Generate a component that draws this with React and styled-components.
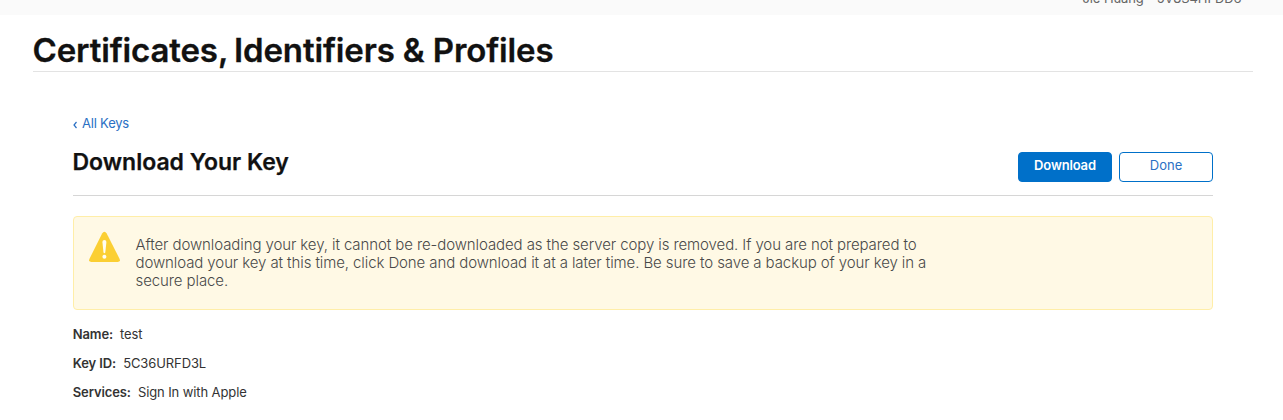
import React from "react";
import styled, { createGlobalStyle } from "styled-components";

const GlobalStyle = createGlobalStyle`
  * { box-sizing: border-box; }
  body { margin: 0; background: #fff; color: #111; font-family: Inter, "Liberation Sans", sans-serif; overflow: hidden; }
`;
const Page = styled.div`height: 420px; overflow: hidden;`;
const TopBar = styled.header`
  height: 15px; background: #fafafa; display: flex; justify-content: flex-end; align-items: flex-end;
  padding: 0 41.5px 9px 0; font-size: 13px; line-height: 16px; letter-spacing: -0.1px; color: #666; white-space: pre; overflow: hidden;
`;
const Title = styled.h1`
  margin: 0 30px 0 33px; height: 57px; padding-top: 15px; border-bottom: 1px solid #e3e3e3;
  font-size: 33px; line-height: 40px; font-weight: 600; letter-spacing: -0.13px; text-indent: -0.5px;
  -webkit-text-stroke: 0.3px #111;
`;
const Comma = styled.span`letter-spacing: -2.6px;`;
const Main = styled.main`padding: 44px 70px 0 73px;`;
const BackLink = styled.a`
  display: flex; align-items: center; gap: 5px; height: 16px; padding-bottom: 2px; font-size: 13px; line-height: 14px;
  letter-spacing: -0.2px; color: #2a70c4;
`;
const Chevron = styled.svg`margin-top: 3px;`;
const Heading = styled.div`
  display: flex; justify-content: space-between; height: 64px; border-bottom: 1px solid #d6d6d6;
`;
const Subtitle = styled.h2`
  margin: 15px 0 0; font-size: 23px; line-height: 30px; font-weight: 600; text-indent: -0.5px;
  -webkit-text-stroke: 0.25px #111;
`;
const Actions = styled.div`display: flex; gap: 7px; padding-top: 20px;`;
const Button = styled.button`
  width: 94px; height: 30px; padding: 0 0 4px; border: 1px solid #0070c9; border-radius: 4px;
  background: ${(p) => (p.$primary ? "#0070c9" : "#fff")}; color: ${(p) => (p.$primary ? "#fff" : "#2a70c4")};
  font: ${(p) => (p.$primary ? 600 : 400)} 13px/18px Inter, sans-serif;
  letter-spacing: ${(p) => (p.$primary ? "-0.15px" : "0")};
`;
const Notice = styled.section`
  margin-top: 20px; height: 94px; padding: 14px 15px 0; display: flex; gap: 14.5px;
  border: 1px solid #ffeea8; border-radius: 4px; background: #fff9e5;
`;
const Message = styled.p`
  margin: 5px 0 0; font-size: 15px; line-height: 18px; font-weight: 300; letter-spacing: -0.095px; color: #494949;
`;
const Details = styled.dl`margin: 10px 0 0;`;
const Detail = styled.div`
  display: flex; gap: 7px; height: 29px; font-size: 13px; line-height: 29px; letter-spacing: -0.1px; color: #333;
`;
const Term = styled.dt`font-weight: 600; text-indent: -0.3px;`;
const Value = styled.dd`margin: 0;`;

export default function App() {
  return (
    <Page>
      <GlobalStyle />
      <TopBar>Jie Huang - 5V8S4HFDD6</TopBar>
      <Title>Certificates<Comma>,</Comma> Identifiers &amp; Profiles</Title>
      <Main>
        <BackLink>
          <Chevron width="4" height="8" viewBox="0 0 4 8" fill="none" stroke="currentColor" strokeWidth="1.2"><path d="M3.5 1 1 4l2.5 3" /></Chevron>
          All Keys
        </BackLink>
        <Heading>
          <Subtitle>Download Your Key</Subtitle>
          <Actions><Button $primary>Download</Button><Button>Done</Button></Actions>
        </Heading>
        <Notice>
          <svg width="32" height="34" viewBox="0 0 32 34">
            <path d="M13.1 2.5Q15.4-1 17.7 2.5L30.4 27.5Q32 31 28.5 31H2.5Q-1 31 .6 27.5Z" fill="#fbcf33" />
            <path d="M13.4 11Q13.4 9 15.4 9T17.4 11L16.3 21.5Q15.4 23 14.5 21.5Z" fill="#fffdf3" />
            <circle cx="15.4" cy="25.7" r="2" fill="#fffdf3" />
          </svg>
          <Message>
            After downloading your key, it cannot be re-downloaded as the server copy is removed. If you are not prepared to<br />
            download your key at this time, click Done and download it at a later time. Be sure to save a backup of your key in a<br />
            secure place.
          </Message>
        </Notice>
        <Details>
          <Detail><Term>Name:</Term><Value>test</Value></Detail>
          <Detail><Term>Key ID:</Term><Value>5C36URFD3L</Value></Detail>
          <Detail><Term>Services:</Term><Value>Sign In with Apple</Value></Detail>
        </Details>
      </Main>
    </Page>
  );
}
